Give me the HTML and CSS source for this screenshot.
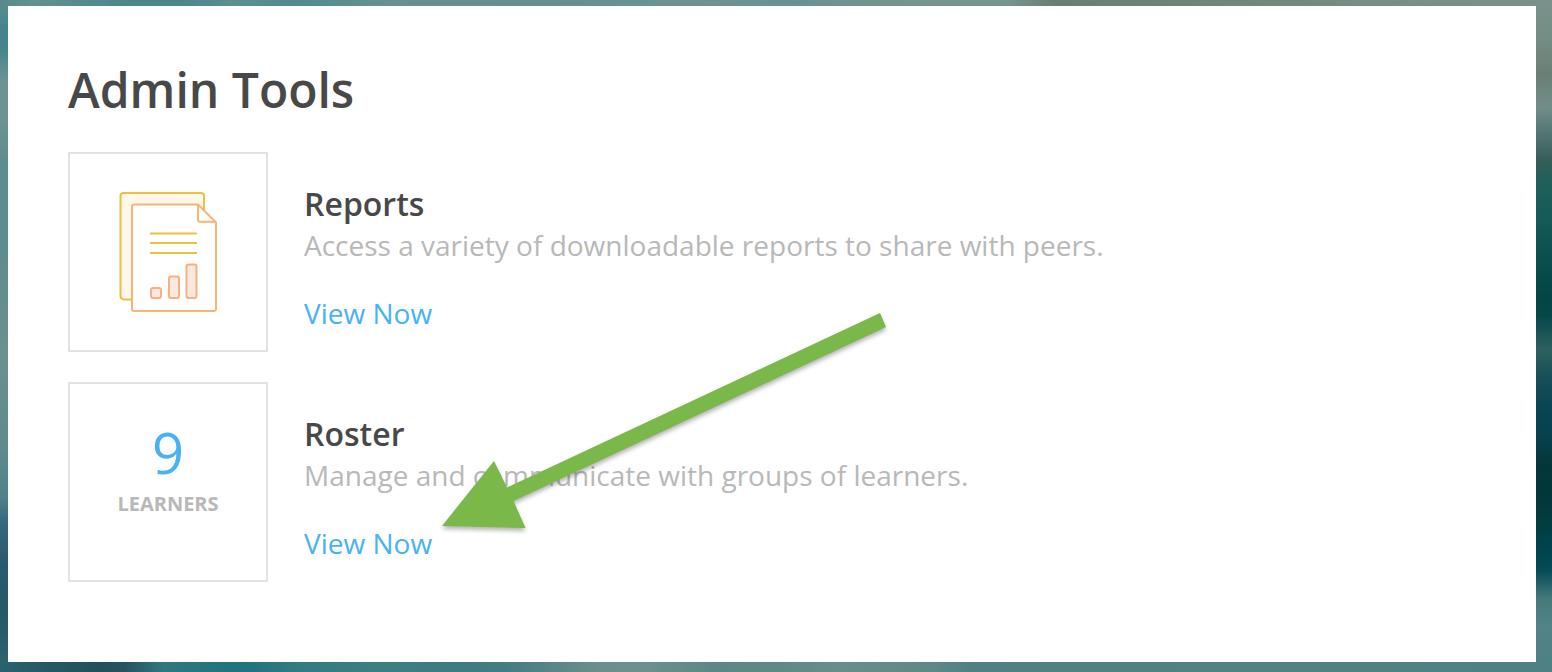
FILE: index.html
```html
<!DOCTYPE html>
<html lang="en">
<head>
<meta charset="utf-8">
<title>Admin Tools</title>
<link rel="stylesheet" href="styles.css">
</head>
<body>
<main class="card">
  <h1 class="title">Admin Tools</h1>
  <div class="tools">
    <section class="tool">
      <div class="tile">
        <svg class="report-icon" width="100" height="124" viewBox="0 0 100 124" fill="none" stroke-width="2" aria-hidden="true">
          <path d="M14 109.500H6Q2.500 109 2.500 106V6Q2.500 3 5.500 3H83Q86 3 86 6V32H14Z" fill="#fff7e9"/>
          <path d="M14 109.500H6Q2.500 109 2.500 106V6Q2.500 3 5.500 3H83Q86 3 86 6V20" stroke="#ecc042"/>
          <path d="M80 14.500H16.500Q14 14.500 14 17V118.500Q14 121 16.500 121H95.500Q98 121 98 118.500V32.500Z" fill="#fff" stroke="#f8b377" stroke-linejoin="round"/>
          <path d="M80 14.500V29.500Q80 31.700 82.200 31.700H97.500" stroke="#f8b377"/>
          <path d="M32 43.500H79M32 53H79M32 63H79" stroke="#ecc042"/>
          <g fill="#fde8dd" stroke="#f5b183">
            <rect x="33" y="98" width="10" height="10" rx="2"/>
            <rect x="51" y="86.500" width="10" height="21.500" rx="2"/>
            <rect x="68.500" y="74.500" width="10" height="33.500" rx="2"/>
          </g>
        </svg>
      </div>
      <div class="info">
        <h2 class="name">Reports</h2>
        <p class="desc">Access a variety of downloadable reports to share with peers.</p>
        <a class="link" href="#reports">View Now</a>
      </div>
    </section>
    <section class="tool">
      <div class="tile">
        <div class="stat">
          <span class="count">9</span>
          <span class="unit">LEARNERS</span>
        </div>
      </div>
      <div class="info">
        <h2 class="name">Roster</h2>
        <p class="desc">Manage and communicate with groups of learners.</p>
        <a class="link" href="#roster">View Now</a>
      </div>
    </section>
  </div>
  <svg class="arrow" width="460" height="230" viewBox="434 307 460 230" aria-hidden="true">
    <path d="M442 526L494 461L507 487.500L880 313L886 327L513.500 501L525.500 528Z" fill="#7ab84a"/>
  </svg>
</main>
</body>
</html>
```
FILE: styles.css
```css
* {
  box-sizing: border-box;
}

body {
  margin: 0;
  min-height: 100vh;
  padding: 6px 16px 10px 8px;
  display: flex;
  font-family: "Open Sans", "Noto Sans", sans-serif;
  color: #484848;
  background-color: #5b8d8d;
  background-image:
    linear-gradient(90deg, #558b8d 0, #64908f 2%, #4c878c 8%, #4c878c 12%, #5d8e90 15%, #528a8e 19%, #669190 25%, #648e8f 35%, #6c9392 43%, #6b9292 52%, #77958e 60%, #75958f 65%, #697f71 68%, #6d8476 76%, #768e83 88%, #78928b 100%),
    linear-gradient(90deg, #2a626d 0, #235863 7%, #224f5b 13%, #25525f 16%, #2f7880 21%, #207480 29%, #1e7480 32%, #327a82 38%, #3b7f83 48%, #3c7c82 60%, #457e84 66%, #6a8f8d 77%, #6c908e 83%, #5b8886 92%, #5d8986 100%),
    linear-gradient(90deg, #5d8986 0, #688e8b 8%, #5e8987 20%, #4f8184 25%, #518384 60%, #4e8184 100%),
    linear-gradient(180deg, #5e8e8e 0, #45848c 4%, #45848c 7%, #6b9393 12%, #6b9393 17%, #5d8d8f 25%, #5d8d8f 37%, #668e8e 47%, #699190 52%, #5e8b8d 67%, #50818a 74%, #35677a 78%, #295b6c 84%, #245966 91%, #2c646f 100%),
    linear-gradient(180deg, #78928b 0, #728d83 6%, #697f75 11%, #718e8a 16%, #587b79 19%, #345d58 24%, #20605a 27%, #165b57 32%, #0b504f 38%, #044548 44%, #07474b 47%, #2c615f 52%, #194f57 56%, #074553 61%, #06404a 66%, #033638 69%, #02383b 75%, #004650 83%, #064c58 85%, #44797c 89%, #528386 93%, #4e8184 100%);
  background-repeat: no-repeat;
  background-position: 0 0, 0 100%, 100% 100%, 0 0, 100% 0;
  background-size: 100% 6px, 50% 10px, 50% 10px, 8px 100%, 16px 100%;
}

.card {
  position: relative;
  flex: 1;
  padding: 52px 60px 80px;
  background: #fff;
}

.title {
  margin: 0;
  font-size: 48px;
  font-weight: 600;
  line-height: 64px;
}

.tools {
  display: grid;
  gap: 30px;
  margin-top: 30px;
}

.tool {
  display: flex;
  gap: 36px;
}

.tile {
  flex: none;
  display: grid;
  place-items: center;
  width: 200px;
  height: 200px;
  border: 2px solid #e2e2e2;
}

.stat {
  display: grid;
  justify-items: center;
  padding-bottom: 20px;
}

.count {
  font-size: 56px;
  line-height: 64px;
  color: #47b2f5;
}

.unit {
  font-size: 20px;
  font-weight: 700;
  line-height: 40px;
  color: #b8b8b8;
}

.info {
  padding-top: 32px;
}

.name {
  margin: 0;
  font-size: 32px;
  font-weight: 600;
  line-height: 40px;
}

.desc {
  margin: 0 0 26px;
  font-size: 28px;
  line-height: 42px;
  color: #b8b8b8;
}

.link {
  display: inline-block;
  font-size: 28px;
  line-height: 42px;
  color: #47b2f5;
  text-decoration: none;
}

.arrow {
  position: absolute;
  left: 426px;
  top: 301px;
  pointer-events: none;
  filter: drop-shadow(0 3px 2px rgba(50, 40, 55, 0.35));
}
```
